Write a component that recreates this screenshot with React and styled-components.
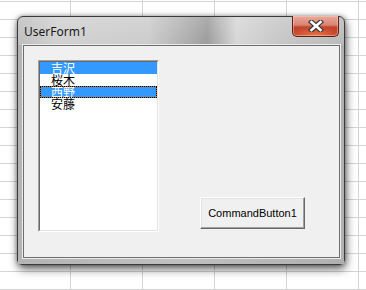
import React from 'react'
import styled, { createGlobalStyle } from 'styled-components'

const GlobalStyle = createGlobalStyle`
  html, body {
    margin: 0;
    height: 290px;
    overflow: hidden;
  }

  body {
    background-color: #fff;
    background-image:
      linear-gradient(90deg, #d4d4d4 1px, transparent 1px),
      linear-gradient(#d4d4d4 1px, transparent 1px);
    background-size: 72px 18px;
    background-position: 70px 1px;
  }
`

const Desk = styled.div`
  padding: 16px 0 0 17px;
`

const Window = styled.div`
  box-sizing: border-box;
  width: 328px;
  height: 249px;
  border: 1px solid #3a3a3a;
  border-radius: 6px 6px 5px 5px;
  display: flex;
  flex-direction: column;
  background:
    linear-gradient(rgba(255, 255, 255, 0.18), rgba(255, 255, 255, 0) 30px),
    linear-gradient(
      90deg,
      #bdbdbd 0%,
      #d0d0d0 12%,
      #cbcbcb 40%,
      #a9a9a9 53%,
      #9a9a9a 58%,
      #d6d6d6 67%,
      #c6c6c6 80%,
      #b9b9b9 100%
    );
  box-shadow: 1px 4px 10px rgba(0, 0, 0, 0.6), 0 0 4px rgba(0, 0, 0, 0.35);
`

const TitleBar = styled.div`
  height: 28px;
  flex: none;
  display: flex;
  align-items: flex-start;
`

const Title = styled.div`
  flex: 1;
  padding: 7px 0 0 6px;
  font-family: 'Noto Sans', 'Open Sans', sans-serif;
  font-size: 12px;
  line-height: 16px;
  color: #1a1a1a;
`

const CloseButton = styled.div`
  width: 47px;
  height: 21px;
  margin: -1px 5px 0 0;
  box-sizing: border-box;
  border: 1px solid #5a2218;
  border-top: none;
  border-radius: 0 0 5px 5px;
  display: flex;
  align-items: center;
  justify-content: center;
  background:
    radial-gradient(ellipse 70% 45% at 50% 100%, rgba(255, 150, 90, 0.7), rgba(255, 150, 90, 0) 100%),
    linear-gradient(#e9aa9c 0%, #d98573 45%, #c4452e 55%, #b8321f 100%);
  box-shadow: inset 0 0 0 1px rgba(255, 210, 200, 0.45);
`

const Frame = styled.div`
  flex: 1;
  padding: 0 4px 6px 5px;
  display: flex;
  background: linear-gradient(90deg, #b4b4b4, #c0c0c0 50%, #b0b0b0);
`

const Client = styled.div`
  flex: 1;
  box-sizing: border-box;
  height: 213px;
  border: 1px solid #6e6e6e;
  box-shadow: 0 0 0 1px #ececec;
  background: #f0f0f0;
  padding: 14px 0 25px 14px;
  display: flex;
  align-items: flex-start;
`

const ListFrame = styled.div`
  box-sizing: border-box;
  width: 121px;
  height: 172px;
  border: 1px solid;
  border-color: #a0a0a0 #fff #fff #a0a0a0;
  display: flex;
`

const List = styled.div`
  flex: 1;
  border: 1px solid;
  border-color: #696969 #e3e3e3 #e3e3e3 #696969;
  background: #fff;
`

const Row = styled.div`
  height: 12px;
  box-sizing: border-box;
  padding-left: 11px;
  font-family: 'Noto Sans CJK JP', 'Noto Sans', sans-serif;
  font-size: 12px;
  line-height: 12px;
  white-space: nowrap;
  color: ${({ selected }) => (selected ? '#fff' : '#000')};
  background: ${({ selected }) => (selected ? '#3399ff' : 'transparent')};
  ${({ focused }) =>
    focused &&
    `
    box-shadow: inset 0 0 0 1px #cc6a1c;
    outline: 1px dotted #000;
    outline-offset: -1px;
  `}
`

const Button = styled.div`
  align-self: flex-end;
  margin: 0 0 3px 41px;
  width: 105px;
  height: 32px;
  box-sizing: border-box;
  border: 1px solid;
  border-color: #fff #696969 #696969 #fff;
  box-shadow: inset -1px -1px 0 #a0a0a0, inset 1px 1px 0 #e3e3e3;
  background: #f0f0f0;
  display: flex;
  align-items: center;
  justify-content: center;
  font-family: 'Liberation Sans', Arial, sans-serif;
  font-size: 11px;
  color: #000;
`

const CloseIcon = () => (
  <svg width="16" height="12" viewBox="0 0 16 12">
    <path d="M3.5 2 L12.5 10 M12.5 2 L3.5 10" stroke="#3b3b3b" strokeWidth="5" strokeLinecap="square" fill="none" />
    <path d="M3.5 2 L12.5 10 M12.5 2 L3.5 10" stroke="#fff" strokeWidth="2.6" strokeLinecap="square" fill="none" />
  </svg>
)

const items = [
  { name: '吉沢', selected: true },
  { name: '桜木' },
  { name: '西野', selected: true, focused: true },
  { name: '安藤' },
]

export default function App() {
  return (
    <>
      <GlobalStyle />
      <Desk>
        <Window>
          <TitleBar>
            <Title>UserForm1</Title>
            <CloseButton>
              <CloseIcon />
            </CloseButton>
          </TitleBar>
          <Frame>
            <Client>
              <ListFrame>
                <List>
                  {items.map((item) => (
                    <Row key={item.name} selected={item.selected} focused={item.focused}>
                      {item.name}
                    </Row>
                  ))}
                </List>
              </ListFrame>
              <Button>CommandButton1</Button>
            </Client>
          </Frame>
        </Window>
      </Desk>
    </>
  )
}
